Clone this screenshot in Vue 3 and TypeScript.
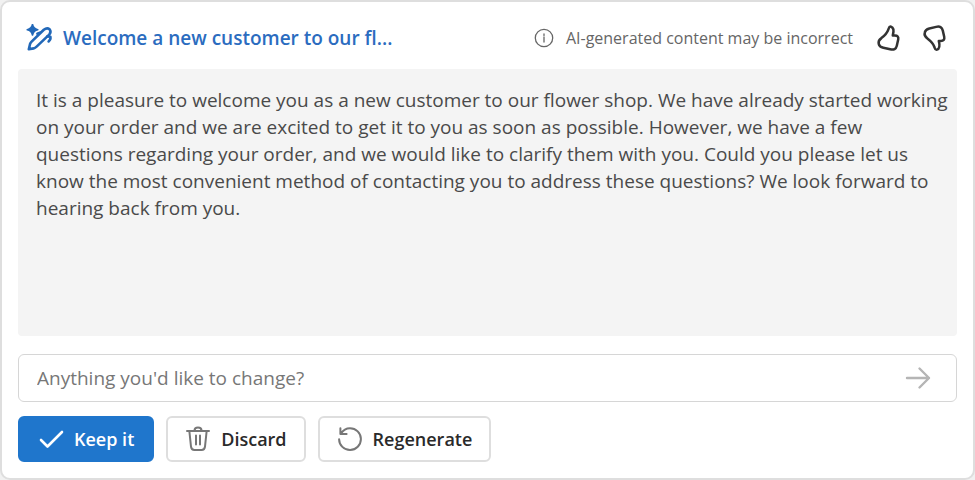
<script setup lang="ts">
import { ref } from 'vue'

const title = 'Welcome a new customer to our fl...'
const draft = ref(
  'It is a pleasure to welcome you as a new customer to our flower shop. We have already started working on your order and we are excited to get it to you as soon as possible. However, we have a few questions regarding your order, and we would like to clarify them with you. Could you please let us know the most convenient method of contacting you to address these questions? We look forward to hearing back from you.'
)
const change = ref('')
</script>

<template>
  <main class="page">
    <section class="card">
      <header class="header">
        <svg class="pen" viewBox="0 0 28 28" aria-hidden="true">
          <path class="spark" d="M6.5 0.4Q7.4 4.8 11.8 5.7Q7.4 6.6 6.5 11Q5.6 6.6 1.2 5.7Q5.6 4.8 6.5 0.4Z" />
          <path d="M2.8 25.2L4 20.2Q4.4 18.8 5.6 17.6L17.8 5.8Q21 3.2 23.6 5.2Q25.6 7.8 23.2 10.6L10.6 22.6Q9.2 24 7.6 24.4Z" />
          <path d="M21.4 12.4L24.4 12.8Q25 15.4 22.6 17.4" />
          <path d="M11.4 9.8L14 8.6" />
        </svg>
        <h1 class="title">{{ title }}</h1>
        <div class="notice">
          <svg class="info" viewBox="0 0 20 20" aria-hidden="true">
            <circle cx="10" cy="10" r="8.7" />
            <path d="M10 9V14M10 6V7.4" />
          </svg>
          <span>AI-generated content may be incorrect</span>
        </div>
        <button class="thumb" type="button" aria-label="Like">
          <svg viewBox="0 0 28 28" aria-hidden="true">
            <path d="M16 2.7C14.2 2.2 14 3.5 13.4 5.3C12.2 9 9.6 11.6 6.4 14.1C3.9 15.8 3.2 17.2 3.7 19.7C4.1 22 5.7 23.2 8.3 23.8L15.2 25.3C18.8 26.2 21 25.1 21.8 21.7L23.2 15.5C23.8 12.8 22.4 11.4 19.9 11.4H17.8C18.7 7.9 18.9 3.5 16 2.7Z" />
          </svg>
        </button>
        <button class="thumb" type="button" aria-label="Dislike">
          <svg viewBox="0 0 28 28" aria-hidden="true">
            <path d="M16 25.6C14.2 26.1 14 24.8 13.4 23C12.2 19.3 9.6 17 6.4 14.5C3.9 12.8 3.2 11.3 3.7 8.8C4.1 6.4 5.7 5.2 8.3 4.5L15.2 2.9C18.8 2 21 3.2 21.8 6.6L23.2 12.8C23.8 15.5 22.4 16.9 19.9 16.9H17.8C18.7 20.4 18.9 24.8 16 25.6Z" />
          </svg>
        </button>
      </header>

      <p class="draft">{{ draft }}</p>

      <form class="prompt" @submit.prevent>
        <input v-model="change" type="text" placeholder="Anything you'd like to change?" aria-label="Anything you'd like to change?" />
        <button type="submit" aria-label="Send">
          <svg viewBox="0 0 28 28" aria-hidden="true">
            <path d="M3 14H25M15.5 4.5L25 14L15.5 23.5" />
          </svg>
        </button>
      </form>

      <div class="actions">
        <button class="action primary" type="button">
          <svg viewBox="0 0 26 26" aria-hidden="true">
            <path d="M3 14L9.5 20.5L24 6" />
          </svg>
          Keep it
        </button>
        <button class="action" type="button">
          <svg viewBox="0 0 26 26" aria-hidden="true">
            <path d="M2 5H24M9.5 4.5C9.5 0.5 16.5 0.5 16.5 4.5M4.4 5.5L6 20.7Q6.4 24 9.4 24H16.6Q19.6 24 20 20.7L21.6 5.5M11 9.5V18.5M15 9.5V18.5" />
          </svg>
          Discard
        </button>
        <button class="action" type="button">
          <svg viewBox="0 0 26 26" aria-hidden="true">
            <path d="M3.4 2.2V8H9.6M4 7.6C6.2 4 9.6 2.2 13 2.2A10.9 10.9 0 1 1 2.1 13.2" />
          </svg>
          Regenerate
        </button>
      </div>
    </section>
  </main>
</template>

<style>
body {
  margin: 0;
  background: #f1f1f1;
}
</style>

<style scoped>
.page {
  box-sizing: border-box;
  min-height: 100vh;
  font-family: "Open Sans", "Noto Sans", sans-serif;
  font-size: 18px;
  color: #4a4a4a;
}

.card {
  box-sizing: border-box;
  display: flex;
  flex-direction: column;
  min-height: 100vh;
  padding: 6px 16px 16px;
  border: 2px solid #dedede;
  border-radius: 10px;
  background: #fff;
}

button,
input {
  font: inherit;
}

svg {
  display: block;
  flex: none;
  fill: none;
  stroke: currentColor;
  stroke-width: 2;
  stroke-linecap: round;
  stroke-linejoin: round;
}

.header {
  display: flex;
  align-items: center;
  height: 59px;
  padding: 0 8px 2px;
}

.pen {
  width: 28px;
  height: 28px;
  margin-right: 9px;
  color: #2268b8;
  stroke-width: 2.6;
}

.pen .spark {
  fill: currentColor;
  stroke: currentColor;
  stroke-width: 1.6;
}

.title {
  margin: 0;
  font-size: 19px;
  font-weight: 600;
  line-height: 28px;
  color: #2b6cbf;
  white-space: nowrap;
}

.notice {
  display: flex;
  align-items: center;
  gap: 12px;
  margin-left: auto;
  margin-right: 4px;
  font-size: 16px;
  color: #666;
}

.info {
  width: 20px;
  height: 20px;
  stroke-width: 1.3;
}

.thumb {
  margin-left: 18px;
  padding: 0;
  border: 0;
  background: none;
  color: #333;
}

.thumb svg {
  width: 28px;
  height: 28px;
  stroke-width: 2.5;
}

.draft {
  flex: 1;
  margin: 0;
  padding: 18px 8px 18px 18px;
  border-radius: 4px;
  background: #f4f4f4;
  font-size: 19px;
  line-height: 27px;
}

.prompt {
  display: flex;
  align-items: center;
  margin: 18px 0 14px;
  padding: 0 24px 0 18px;
  border: 1px solid #d6d6d6;
  border-radius: 6px;
}

.prompt input {
  flex: 1;
  min-width: 0;
  height: 46px;
  padding: 0;
  border: 0;
  outline: 0;
  background: none;
  font-size: 19px;
  color: #505050;
}

.prompt input::placeholder {
  color: #777;
  opacity: 1;
}

.prompt button {
  padding: 0;
  border: 0;
  background: none;
  color: #b5b5b5;
}

.prompt svg {
  width: 28px;
  height: 28px;
  stroke-width: 2.4;
}

.actions {
  display: flex;
  gap: 12px;
}

.action {
  display: flex;
  align-items: center;
  gap: 10px;
  height: 46px;
  padding: 0 17px;
  border: 2px solid #dedede;
  border-radius: 6px;
  background: #fff;
  font-weight: 600;
  color: #2a2a2a;
}

.action svg {
  width: 26px;
  height: 26px;
  color: #777;
}

.action.primary {
  padding: 0 18px;
  border-color: #1f76cc;
  background: #1f76cc;
  color: #fff;
}

.action.primary svg {
  color: #fff;
  stroke-width: 2.6;
}
</style>
